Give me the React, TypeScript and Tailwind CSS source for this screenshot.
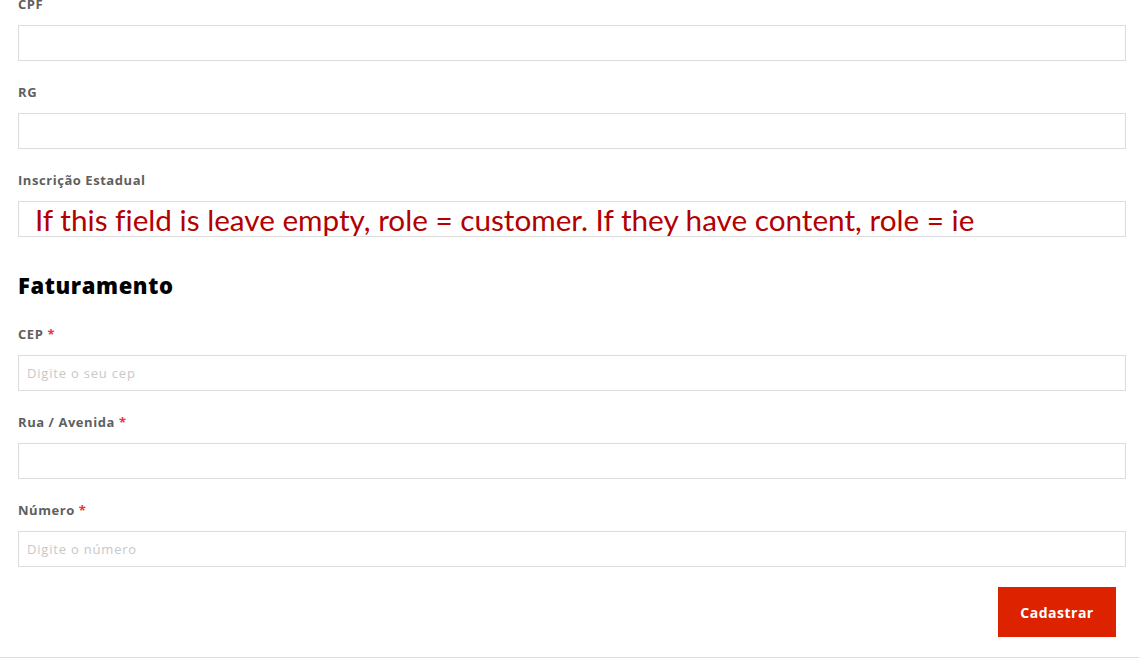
function Field({
  label,
  required,
  placeholder,
  children,
}: {
  label: string
  required?: boolean
  placeholder?: string
  children?: React.ReactNode
}) {
  return (
    <div className="mb-[21px]">
      <label className="block text-[13px] leading-[20px] font-bold tracking-[0.55px] text-[#5f5f5f] mb-[11px]">
        {label}
        {required && <span className="text-[#f0303a] ml-1">*</span>}
      </label>
      <div className="relative">
        <input
          type="text"
          placeholder={placeholder}
          className="block w-full h-[36px] border border-[#dcdcdc] bg-white px-[8px] text-[13px] tracking-[0.8px] text-[#333] placeholder:text-[#c8c8c8] outline-none"
        />
        {children}
      </div>
    </div>
  )
}

export default function App() {
  return (
    <div className="w-[1139px] h-[658px] overflow-hidden bg-white font-['Open_Sans',sans-serif]">
      <div className="px-[18px] pr-[13px] -mt-[6px]">
        <Field label="CPF" />
        <Field label="RG" />
        <Field label="Inscrição Estadual">
          <span className="absolute left-[17px] top-[1px] font-['Lato',sans-serif] text-[29.7px] leading-[36px] text-[#b30000] whitespace-nowrap pointer-events-none [font-variant-ligatures:none]">
            If this field is leave empty, role = customer. If they have content, role = ie
          </span>
        </Field>

        <h2 className="mt-[34px] mb-[25px] text-[22px] leading-[28px] font-extrabold tracking-[0.6px] text-black">
          Faturamento
        </h2>

        <Field label="CEP" required placeholder="Digite o seu cep" />
        <Field label="Rua / Avenida" required />
        <Field label="Número" required placeholder="Digite o número" />

        <div className="flex justify-end pr-[10px] -mt-[1px]">
          <button className="w-[118px] h-[50px] bg-[#dd2200] text-white text-[14px] font-bold tracking-[0.5px]">
            Cadastrar
          </button>
        </div>
      </div>
      <div className="mt-[20px] border-t border-[#dddddd]" />
    </div>
  )
}
